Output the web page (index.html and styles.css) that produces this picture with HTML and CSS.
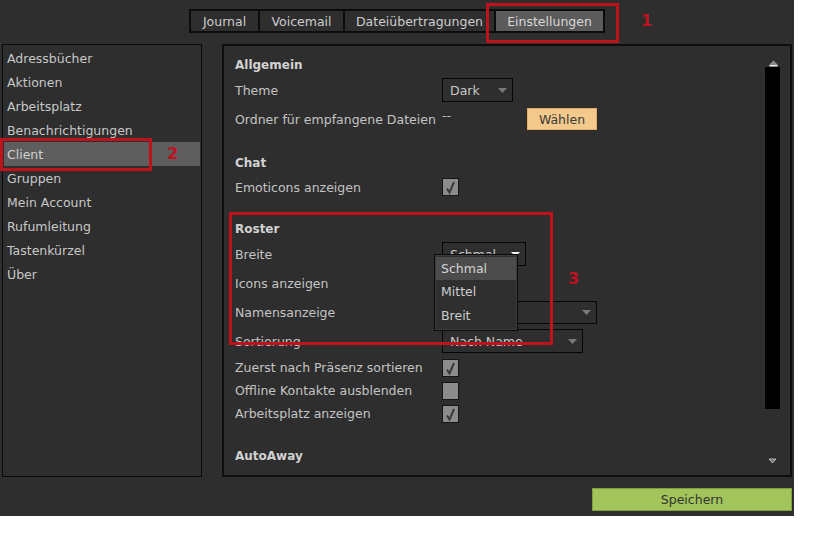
FILE: index.html
```html
<!DOCTYPE html>
<html lang="de">
<head>
<meta charset="utf-8">
<title>Einstellungen</title>
<link rel="stylesheet" href="styles.css">
</head>
<body>
<div class="app">
  <nav class="tabs-wrap">
    <div class="tabs">
      <div class="tab tab-journal">Journal</div>
      <div class="tab tab-voicemail">Voicemail</div>
      <div class="tab tab-files">Dateiübertragungen</div>
      <div class="tab tab-settings active">Einstellungen</div>
    </div>
  </nav>

  <div class="main-row">
    <ul class="sidebar">
      <li>Adressbücher</li>
      <li>Aktionen</li>
      <li>Arbeitsplatz</li>
      <li>Benachrichtigungen</li>
      <li class="selected">Client</li>
      <li>Gruppen</li>
      <li>Mein Account</li>
      <li>Rufumleitung</li>
      <li>Tastenkürzel</li>
      <li>Über</li>
    </ul>

    <section class="panel">
      <div class="content">
        <div class="row heading r-allgemein">Allgemein</div>
        <div class="row r-theme">
          <span class="label">Theme</span>
          <div class="select w-theme"><span>Dark</span>
            <svg class="arrow" width="9" height="5" viewBox="0 0 9 5"><path d="M0 0H9L4.5 5Z" fill="#7a7a7a"/></svg>
          </div>
        </div>
        <div class="row r-ordner">
          <span class="label">Ordner für empfangene Dateien</span>
          <span class="dashes">--</span>
          <button class="choose">Wählen</button>
        </div>

        <div class="row heading r-chat">Chat</div>
        <div class="row r-emoticons">
          <span class="label">Emoticons anzeigen</span>
          <span class="check"><svg width="17" height="18" viewBox="0 0 17 18"><path d="M5 10.5L7.5 14.5L12 4" fill="none" stroke="#3a3a3a" stroke-width="2"/></svg></span>
        </div>

        <div class="row heading r-roster">Roster</div>
        <div class="row r-breite">
          <span class="label">Breite</span>
          <div class="select w-breite"><span>Schmal</span>
            <svg class="arrow" width="9" height="5" viewBox="0 0 9 5"><path d="M0 0H9L4.5 5Z" fill="#f2f2f2"/></svg>
          </div>
        </div>
        <div class="row r-gap5">
          <span class="label">Icons anzeigen</span>
          <span class="check"><svg width="17" height="18" viewBox="0 0 17 18"><path d="M5 10.5L7.5 14.5L12 4" fill="none" stroke="#3a3a3a" stroke-width="2"/></svg></span>
        </div>
        <div class="row r-gap5">
          <span class="label">Namensanzeige</span>
          <div class="select w-namen"><span></span>
            <svg class="arrow" width="9" height="5" viewBox="0 0 9 5"><path d="M0 0H9L4.5 5Z" fill="#7a7a7a"/></svg>
          </div>
        </div>
        <div class="row r-gap5">
          <span class="label">Sortierung</span>
          <div class="select w-sort"><span>Nach Name</span>
            <svg class="arrow" width="9" height="5" viewBox="0 0 9 5"><path d="M0 0H9L4.5 5Z" fill="#7a7a7a"/></svg>
          </div>
        </div>
        <div class="row crow r-zuerst">
          <span class="label">Zuerst nach Präsenz sortieren</span>
          <span class="check"><svg width="17" height="18" viewBox="0 0 17 18"><path d="M5 10.5L7.5 14.5L12 4" fill="none" stroke="#3a3a3a" stroke-width="2"/></svg></span>
        </div>
        <div class="row crow">
          <span class="label">Offline Kontakte ausblenden</span>
          <span class="check"></span>
        </div>
        <div class="row crow">
          <span class="label">Arbeitsplatz anzeigen</span>
          <span class="check"><svg width="17" height="18" viewBox="0 0 17 18"><path d="M5 10.5L7.5 14.5L12 4" fill="none" stroke="#3a3a3a" stroke-width="2"/></svg></span>
        </div>

        <div class="row heading r-autoaway">AutoAway</div>
      </div>

      <div class="scrollbar">
        <svg class="sb-up" width="9" height="7" viewBox="0 0 9 7"><path d="M1 4L4.5 0.5L8 4Z" fill="#8a8a8a"/><rect x="0.5" y="4.5" width="8" height="2" fill="#e8e8e8"/></svg>
        <div class="sb-track"></div>
        <svg class="sb-down" width="9" height="6" viewBox="0 0 9 6"><path d="M1 1H8L4.5 5Z" fill="#777" stroke="#cfcfcf" stroke-width="0.8"/></svg>
      </div>
    </section>
  </div>

  <div class="footer">
    <button class="save">Speichern</button>
  </div>

  <ul class="popup">
    <li class="hl">Schmal</li>
    <li>Mittel</li>
    <li>Breit</li>
  </ul>

  <div class="mark mark-1"></div>
  <div class="mark mark-2"></div>
  <div class="mark mark-3"></div>
  <span class="num num-1">1</span>
  <span class="num num-2">2</span>
  <span class="num num-3">3</span>
</div>
</body>
</html>
```

FILE: styles.css
```css
* { box-sizing: border-box; }

body {
  margin: 0;
  background: #ffffff;
  font-family: "DejaVu Sans", "Noto Sans", sans-serif;
  font-size: 12.5px;
}

.app {
  position: relative;
  width: 794px;
  height: 516px;
  background: #2e2e2e;
  color: #c4c4c4;
  overflow: hidden;
}

/* Tabs */
.tabs-wrap {
  display: flex;
  justify-content: center;
  padding-top: 9px;
}

.tabs {
  display: flex;
  gap: 2px;
  padding: 2px;
  background: #0c0c0c;
}

.tab {
  height: 20px;
  line-height: 21px;
  text-align: center;
  background: #2e2e2e;
  color: #cdcdcd;
}

.tab-journal { width: 67px; }
.tab-voicemail { width: 83px; }
.tab-files { width: 149px; }
.tab-settings { width: 107px; }

.tab.active {
  background: #5b5b5b;
  color: #d8d8d8;
}

/* Main row */
.main-row {
  display: flex;
  gap: 20px;
  margin-top: 11px;
  padding-left: 2px;
  height: 433px;
}

.sidebar {
  list-style: none;
  margin: 0;
  padding: 1px;
  width: 200px;
  height: 433px;
  border: 1px solid #0a0a0a;
}

.sidebar li {
  height: 24px;
  line-height: 26px;
  padding-left: 3px;
  color: #c8c8c8;
}

.sidebar li.selected {
  background: #5e5e5e;
  color: #d2d2d2;
}

.panel {
  display: flex;
  width: 570px;
  height: 433px;
  border: 2px solid #0e0e0e;
}

.content {
  flex: 1;
  display: flex;
  flex-direction: column;
  padding: 7px 0 0 11px;
}

.row {
  display: flex;
  align-items: center;
  height: 24px;
  flex-shrink: 0;
}

.heading {
  font-weight: bold;
  font-size: 12px;
  color: #d2d2d2;
}

.label {
  width: 207px;
  flex-shrink: 0;
  white-space: nowrap;
}

.r-theme { margin-top: 1px; }
.r-ordner { margin-top: 5px; }
.r-chat { margin-top: 20px; }
.r-roster { margin-top: 18px; }
.r-breite { margin-top: 1px; }
.r-gap5 { margin-top: 5px; }
.crow { height: 23px; }
.r-zuerst { margin-top: 3px; }
.r-autoaway { margin-top: 19px; }

.select {
  display: flex;
  align-items: center;
  justify-content: space-between;
  height: 24px;
  border: 1px solid #050505;
  padding: 0 5px 0 7px;
  color: #c8c8c8;
}

.w-theme { width: 71px; }
.w-breite { width: 84px; }
.w-namen { width: 155px; height: 23px; }
.w-sort { width: 141px; }

.dashes {
  align-self: flex-start;
  width: 85px;
  line-height: 18px;
  color: #bdbdbd;
}

.choose {
  width: 70px;
  height: 22px;
  padding: 0;
  font: inherit;
  color: #3a3a3a;
  background: #f4c98c;
  border: 1px solid #e3ad63;
}

.check {
  display: block;
  width: 17px;
  height: 18px;
  background: #8c8c8c;
  border: 1px solid #151515;
}

.check svg {
  display: block;
  margin: -1px;
}

/* Scrollbar */
.scrollbar {
  width: 15px;
  margin-right: 10px;
  padding-top: 14px;
  display: flex;
  flex-direction: column;
  align-items: center;
}

.sb-up { display: block; margin-left: 1px; }

.sb-track {
  width: 15px;
  height: 342px;
  background: #000;
}

.sb-down {
  display: block;
  margin-top: 49px;
  margin-left: 0;
}

/* Footer */
.footer {
  display: flex;
  justify-content: flex-end;
  padding-right: 2px;
  margin-top: 11px;
}

.save {
  width: 200px;
  height: 23px;
  padding: 0;
  font: inherit;
  color: #333333;
  background: #a2c45a;
  border: 1px solid #7f9f3e;
}

/* Dropdown popup (overlay) */
.popup {
  position: absolute;
  left: 434px;
  top: 254px;
  width: 84px;
  height: 77px;
  margin: 0;
  padding: 2px 1px;
  list-style: none;
  background: #2f2f2f;
  border: 1px solid #0c0c0c;
  box-shadow: inset 0 0 0 1px #3a3a3a;
}

.popup li {
  height: 24px;
  line-height: 24px;
  padding-left: 5px;
  color: #cccccc;
}

.popup li.hl {
  height: 23px;
  background: #4b4b4b;
  color: #d4d4d4;
}

/* Annotations (overlay) */
.mark {
  position: absolute;
  border: 3px solid #c1111d;
}

.mark-1 { left: 486px; top: 3px; width: 133px; height: 40px; }
.mark-2 { left: 0; top: 138px; width: 152px; height: 33px; }
.mark-3 { left: 229px; top: 212px; width: 324px; height: 133px; }

.num {
  position: absolute;
  font-family: "DejaVu Sans", sans-serif;
  font-weight: bold;
  font-size: 16px;
  line-height: 16px;
  color: #c1111d;
}

.num-1 { left: 641px; top: 13px; }
.num-2 { left: 167px; top: 146px; }
.num-3 { left: 568px; top: 271px; }
```
